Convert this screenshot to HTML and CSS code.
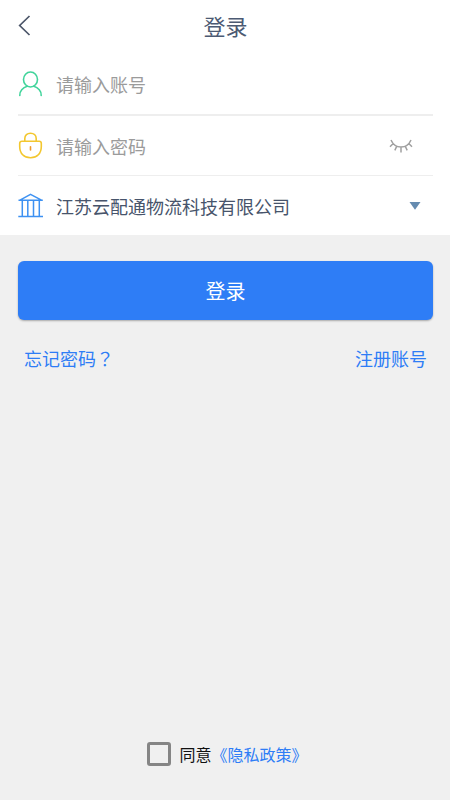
FILE: index.html
```html
<!DOCTYPE html>
<html lang="zh-CN">
<head>
<meta charset="utf-8">
<meta name="viewport" content="width=device-width, initial-scale=1">
<title>登录</title>
<link rel="stylesheet" href="styles.css">
</head>
<body>
<form class="page">
  <div class="panel">
    <header class="header">
      <button class="icon-button back" type="button" aria-label="返回">
        <svg width="14" height="22" viewBox="0 0 14 22" fill="none" stroke="#4c5669" stroke-width="1.700"><path d="M11.500 2 1.700 11.500 11.500 21"/></svg>
      </button>
      <h1 class="title">登录</h1>
    </header>
    <div class="row row-account">
      <svg class="row-icon" viewBox="0 0 26 28" fill="none" stroke="#41d49b" stroke-width="1.600" stroke-linecap="round"><ellipse cx="12.500" cy="9.500" rx="7" ry="7.500"/><path d="M1.800 25.500C1.300 21 5 17.500 9.200 16.300M15.800 16.300C20 17.500 23.700 21 23.200 25.500"/></svg>
      <input class="field" type="text" placeholder="请输入账号" aria-label="账号">
    </div>
    <div class="row row-password">
      <svg class="row-icon" viewBox="0 0 26 28" fill="none" stroke="#f3c72f" stroke-width="1.600" stroke-linecap="round" stroke-linejoin="round"><path d="M6.800 9.200V6.500C6.800 3.300 9.200 1.200 12.500 1.200S18.200 3.300 18.200 6.500V9.200"/><path d="M4 9.300H21.200Q23.300 9.300 23.300 11.500V14.500C23.300 21.500 19 25.800 12.500 25.800S1.700 21.500 1.700 14.500V11.500Q1.700 9.300 4 9.300Z"/><path stroke="#f09a2c" d="M12.500 14.800V18"/></svg>
      <input class="field" type="password" placeholder="请输入密码" aria-label="密码">
      <button class="icon-button eye" type="button" aria-label="显示密码">
        <svg width="24" height="16" viewBox="0 0 24 16" fill="none" stroke="#a0a0a0" stroke-width="1.500"><path d="M2 2Q5 9 12 9T22 2M4.200 5.500 1 8.700M7.800 8.200 5.800 12.300M12 9V14.500M16.200 8.200 18.200 12.300M19.800 5.500 23 8.700"/></svg>
      </button>
    </div>
    <div class="row">
      <svg class="row-icon" viewBox="0 0 26 28" fill="none" stroke="#3d91f2" stroke-width="1.500" stroke-linejoin="round"><path d="M.5 8.300H24.800M1.500 8.300 12.500 2.300 24 8.300M.3 24.500H25M4.300 8.300V24.500M9.800 8.300V24.500M15.500 8.300V24.500M21.300 8.300V24.500"/></svg>
      <select class="field company" aria-label="公司"><option>江苏云配通物流科技有限公司</option></select>
      <svg class="caret" width="12" height="8" viewBox="0 0 12 8" fill="#658bb0"><path d="M.5 0H11.500L6 7.800Z"/></svg>
    </div>
  </div>
  <main class="actions">
    <button class="submit" type="submit">登录</button>
    <nav class="links"><a href="#forgot">忘记密码<span class="mark">？</span></a><a href="#register">注册账号</a></nav>
  </main>
  <footer class="agreement">
    <input class="check" id="agree" type="checkbox">
    <label for="agree">同意</label><a href="#privacy">《隐私政策》</a>
  </footer>
</form>
</body>
</html>
```
FILE: styles.css
```css
* { box-sizing: border-box; }

body {
  margin: 0;
  background: #f0f0f0;
  font-family: "Noto Sans CJK SC", sans-serif;
}

button, input, select { font-family: inherit; }

a { color: #2e7df6; text-decoration: none; }

.page {
  display: flex;
  flex-direction: column;
  min-height: 100vh;
}

.panel { background: #fff; padding: 0 17px 0 18px; }

.header {
  display: grid;
  grid-template-columns: 32px 1fr 32px;
  align-items: center;
  height: 54px;
  padding-bottom: 4px;
}

.title {
  margin: 0;
  color: #4c5a73;
  font-size: 22px;
  font-weight: 400;
  line-height: 32px;
  text-align: center;
}

.icon-button {
  display: flex;
  align-items: center;
  padding: 0;
  border: 0;
  background: none;
}

.back { height: 32px; }

.row {
  display: flex;
  align-items: center;
  height: 60px;
}

.row + .row { border-top: 1px solid #eee; }

.row-account + .row-password { height: 61px; border-top-width: 2px; }

.row-icon { width: 26px; height: 28px; margin-right: 12px; flex: none; }

.field {
  flex: 1;
  min-width: 0;
  height: 36px;
  padding: 0;
  border: 0;
  outline: 0;
  background: none;
  color: #47546b;
  font-size: 18px;
  line-height: 36px;
}

.field::placeholder { color: #9b9b9b; }

.company { appearance: none; }

.eye { margin-right: 20px; }

.caret { margin-right: 12px; pointer-events: none; }

.actions { padding: 26px 17px 0 18px; }

.submit {
  width: 100%;
  height: 59px;
  padding: 0;
  border: 0;
  border-radius: 6px;
  background: #2e7df6;
  box-shadow: 0 1px 2px #0000004d;
  color: #fff;
  font-size: 20px;
}

.links {
  display: flex;
  justify-content: space-between;
  padding: 25px 6px 0;
  font-size: 18px;
  line-height: 26px;
}

.mark { font-family: "Noto Sans CJK TC", sans-serif; }

.mark:lang(zh) { font-feature-settings: "locl" 0; }

.agreement {
  display: flex;
  justify-content: center;
  align-items: center;
  margin-top: auto;
  padding: 0 0 34px 5px;
  color: #111;
  font-size: 16px;
  line-height: 24px;
}

.check {
  appearance: none;
  width: 24px;
  height: 24px;
  margin: 0 8px 0 0;
  border: 3px solid #858585;
  border-radius: 3px;
}

.check:checked { background: #2e7df6; }
```
